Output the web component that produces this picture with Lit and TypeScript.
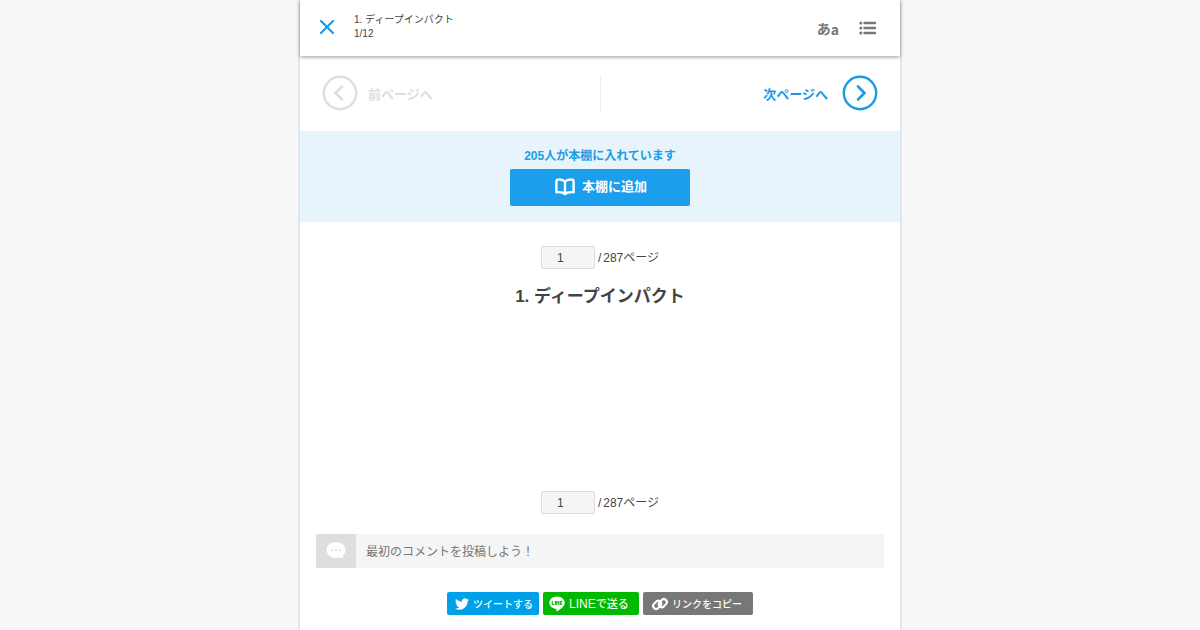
import { LitElement, html, css, svg } from "lit";
import { customElement } from "lit/decorators.js";

const closeIcon = svg`<svg width="16" height="16" viewBox="0 0 16 16" fill="none" stroke="currentColor" stroke-width="2.200" stroke-linecap="round"><path d="M2 2l12 12M14 2L2 14"/></svg>`;
const listIcon = svg`<svg width="18" height="14" viewBox="0 0 18 14" fill="currentColor"><circle cx="1.8" cy="2" r="1.5"/><circle cx="1.8" cy="7" r="1.5"/><circle cx="1.8" cy="12" r="1.5"/><path d="M5.5 2h10.500M5.5 7h10.500M5.5 12h10.500" stroke="currentColor" stroke-width="2.4" stroke-linecap="round"/></svg>`;
const prevIcon = svg`<svg width="36" height="36" viewBox="0 0 36 36" fill="none" stroke="currentColor"><circle cx="18" cy="18" r="16.2" stroke-width="2.4"/><path d="M20 11.5L13.5 18l6.5 6.5" stroke-width="2.6" stroke-linecap="round"/></svg>`;
const nextIcon = svg`<svg width="36" height="36" viewBox="0 0 36 36" fill="none" stroke="currentColor"><circle cx="18" cy="18" r="16.2" stroke-width="2.4"/><path d="M16 11.5l6.5 6.5-6.5 6.5" stroke-width="2.6" stroke-linecap="round"/></svg>`;
const bookIcon = svg`<svg width="20" height="18" viewBox="0 0 20 18" fill="none" stroke="currentColor" stroke-width="2.400" stroke-linejoin="round" stroke-linecap="round"><path d="M10 3.600C8.400 1.800 5.500 1.300 2.800 1.600Q1.400 1.800 1.400 3v11.300c4-.4 6.900.1 8.600 1.900 1.700-1.800 4.600-2.300 8.600-1.900V3Q18.600 1.800 17.200 1.600C14.500 1.300 11.600 1.800 10 3.600v12"/></svg>`;
const bubbleIcon = svg`<svg width="20" height="18" viewBox="0 0 20 18"><path fill="#fff" d="M10 1c5.400 0 9.500 3.400 9.500 7.900 0 2.300-1.100 4.200-2.800 5.500l1.100 2.800-4.300-1c-1.100.4-2.200.5-3.500.5C4.600 16.700.5 13.400.5 8.900S4.600 1 10 1z"/><g fill="#dedede"><circle cx="6" cy="9" r="1.100"/><circle cx="10" cy="9" r="1.100"/><circle cx="14" cy="9" r="1.100"/></g></svg>`;
const birdIcon = svg`<svg width="14" height="14" viewBox="0 0 24 24" fill="#fff"><path d="M23.950 4.570a10 10 0 0 1-2.820.77 4.960 4.960 0 0 0 2.160-2.720c-.95.55-2 .95-3.130 1.180a4.920 4.920 0 0 0-8.380 4.480C7.690 8.090 4.070 6.130 1.640 3.160a4.820 4.820 0 0 0-.67 2.480c0 1.710.87 3.210 2.190 4.100a4.900 4.900 0 0 1-2.230-.62v.06a4.920 4.920 0 0 0 3.950 4.830 5 5 0 0 1-2.210.08 4.940 4.940 0 0 0 4.600 3.420A9.870 9.870 0 0 1 0 19.540a14 14 0 0 0 7.550 2.210c9.050 0 14-7.500 14-13.980 0-.21 0-.42-.02-.63a9.940 9.940 0 0 0 2.460-2.550z"/></svg>`;
const lineIcon = svg`<svg width="16" height="16" viewBox="0 0 16 16"><path fill="#fff" d="M8 .5c4.300 0 7.700 2.800 7.700 6.300 0 1.500-.6 2.700-1.700 4-1.600 1.800-4.800 3.900-6 4.500-.8.300-.6-.3-.5-.6l.1-1.600C3.300 12.700.3 10 .3 6.800.3 3.300 3.700.5 8 .5z"/><path fill="none" stroke="#00b900" stroke-width="1" d="M3.300 4.900v3.600h1.900M6.300 4.900V9M7.700 9V5l2.200 3.600V4.900M13.200 5.400h-1.800v3.100h1.800M11.400 6.950h1.700"/></svg>`;
const linkIcon = svg`<svg width="16" height="14" viewBox="0 0 16 14" fill="none" stroke="#fff" stroke-width="2.100"><rect x="-4.500" y="-3" width="9" height="6" rx="3" transform="translate(5.200 7.800) rotate(-48)"/><rect x="-4.500" y="-3" width="9" height="6" rx="3" transform="translate(10.800 6.200) rotate(-48)"/></svg>`;

@customElement("app-root")
export class AppRoot extends LitElement {
  static styles = css`
    :host {
      display: block;
      min-height: 100vh;
      background: #f8f8f8;
      color: #444;
      font: 12px/14px "Liberation Sans", "Noto Sans CJK JP", sans-serif;
    }
    * { box-sizing: border-box; }
    svg { display: block; flex: none; }
    button { font: inherit; color: inherit; border: 0; padding: 0; background: none; cursor: pointer; }
    a { color: inherit; text-decoration: none; }
    .page {
      max-width: 600px;
      min-height: 100vh;
      margin: 0 auto;
      background: #fff;
      box-shadow: 0 0 3px rgba(0, 0, 0, 0.25);
    }
    .header {
      display: flex;
      align-items: center;
      height: 56px;
      padding: 0 23px 0 19px;
      box-shadow: 0 1px 4px rgba(0, 0, 0, 0.4);
      color: #777;
    }
    .close { color: #1a9be6; padding-bottom: 2px; }
    .titles { flex: 1; margin: 0 19px; padding-bottom: 2px; font-size: 10px; color: #444; }
    .titles p { margin: 0; }
    .letters {
      display: flex;
      align-items: flex-start;
      margin-right: 20px;
      font: bold 14px/14px "Noto Sans CJK JP", sans-serif;
    }
    .latin { padding-top: 1px; }
    .pager {
      display: flex;
      justify-content: space-between;
      align-items: center;
      padding: 19px 22px 20px;
      font-size: 13px;
      font-weight: bold;
    }
    .pager a { display: flex; flex: 1; align-items: center; gap: 10px; color: #dedede; }
    .pager .next { justify-content: flex-end; gap: 14px; color: #1a9be6; }
    .pager span { padding-top: 3px; }
    .rule { width: 1px; height: 36px; background: #eee; }
    .shelf {
      display: flex;
      flex-direction: column;
      align-items: center;
      gap: 6px;
      padding: 18px 16px 16px;
      background: #e7f4fc;
      color: #1c9ce2;
      font-weight: bold;
    }
    .shelf p { margin: 0; }
    .add {
      display: flex;
      align-items: center;
      justify-content: center;
      gap: 7px;
      width: 180px;
      height: 37px;
      padding: 0 0 2px 2px;
      border-radius: 2px;
      background: #1b9fec;
      color: #fff;
      font-size: 13px;
    }
    .count { display: flex; align-items: center; justify-content: center; gap: 3px; }
    .total { display: flex; gap: 2px; padding-top: 1px; }
    .number {
      width: 54px;
      height: 23px;
      padding: 0 15px;
      border: 1px solid #ddd;
      border-radius: 2px;
      background: #f5f5f5;
      color: #444;
      font: inherit;
    }
    .body { padding: 24px 16px 15px; }
    .body h1 { min-height: 189px; margin: 17px 0 16px; font-size: 17px; line-height: 22px; text-align: center; }
    .comment { display: flex; height: 34px; margin-top: 20px; border-radius: 2px; overflow: hidden; }
    .bubble { display: grid; place-items: center; width: 40px; padding-bottom: 2px; background: #dedede; }
    .comment input {
      flex: 1;
      min-width: 0;
      border: 0;
      padding: 2px 10px 0;
      background: #f5f5f5;
      color: #444;
      font: inherit;
    }
    .comment input::placeholder { color: #777; opacity: 1; }
    .share { display: flex; justify-content: center; gap: 4px; margin-top: 24px; }
    .chip {
      display: flex;
      align-items: center;
      gap: 4px;
      height: 23px;
      padding: 0 8px;
      border-radius: 2px;
      color: #fff;
      font: 500 10px/14px "Noto Sans CJK JP", sans-serif;
      white-space: nowrap;
    }
    .tweet { width: 92px; background: #00a0e9; }
    .line { width: 96px; padding: 0 6px; background: #00b900; font-size: 11px; }
    .brand { font: 12px/14px "Liberation Sans", sans-serif; }
    .copy { width: 110px; padding: 0 9px; background: #777; }
  `;

  private counter(name: string) {
    return html`<div class="count">
      <input class="number" type="text" value="1" aria-label=${name} />
      <span class="total"><span>/</span><span>287ページ</span></span>
    </div>`;
  }

  render() {
    return html`<div class="page">
      <header class="header">
        <button class="close" aria-label="閉じる">${closeIcon}</button>
        <div class="titles"><p>1. ディープインパクト</p><p>1/12</p></div>
        <button class="letters"><span>あ</span><span class="latin">a</span></button>
        <button aria-label="目次">${listIcon}</button>
      </header>
      <nav class="pager">
        <a class="prev" href="#prev">${prevIcon}<span>前ページへ</span></a>
        <div class="rule"></div>
        <a class="next" href="#next"><span>次ページへ</span>${nextIcon}</a>
      </nav>
      <section class="shelf">
        <p>205人が本棚に入れています</p>
        <button class="add">${bookIcon}<span>本棚に追加</span></button>
      </section>
      <main class="body">
        ${this.counter("ページ番号")}
        <h1>1. ディープインパクト</h1>
        ${this.counter("ページ番号")}
        <label class="comment">
          <span class="bubble">${bubbleIcon}</span>
          <input type="text" placeholder="最初のコメントを投稿しよう！" aria-label="コメント" />
        </label>
        <div class="share">
          <a class="chip tweet" href="#tweet">${birdIcon}<span>ツイートする</span></a>
          <a class="chip line" href="#line">${lineIcon}<span><span class="brand">LINE</span>で送る</span></a>
          <button class="chip copy">${linkIcon}<span>リンクをコピー</span></button>
        </div>
      </main>
    </div>`;
  }
}
